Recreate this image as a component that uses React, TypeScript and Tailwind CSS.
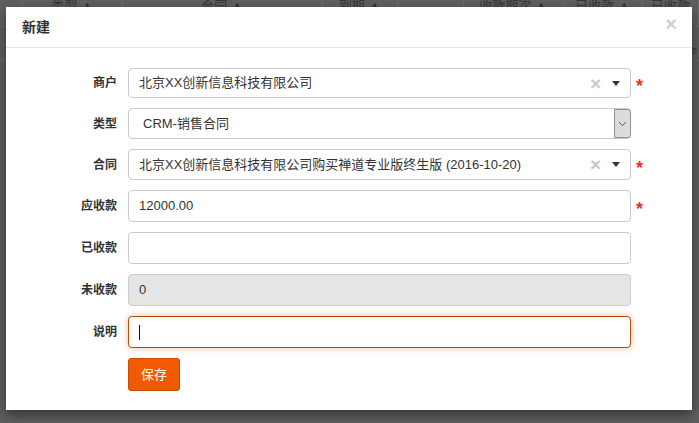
import React from 'react';

const font = { fontFamily: '"Liberation Sans", "Noto Sans CJK SC", sans-serif' };

function Select2({ value }: { value: string }) {
  return (
    <div className="flex-1 h-full flex items-center border border-[#ccc] rounded-[4px] bg-white pl-[10px] pr-[8px]">
      <span className="flex-1 truncate text-[13px] text-[#333]">{value}</span>
      <span className="text-[#c8c8c8] text-[19px] font-bold leading-none mr-[11px]">×</span>
      <span className="w-0 h-0 border-l-[4px] border-r-[4px] border-t-[5px] border-l-transparent border-r-transparent border-t-[#333] mr-[2px]" />
    </div>
  );
}

function Row({
  label,
  h,
  required,
  children,
}: {
  label: string;
  h: string;
  required?: boolean;
  children: React.ReactNode;
}) {
  return (
    <div className={`flex items-center ${h} mb-[10px]`}>
      <div className="w-[122px] shrink-0 pr-[11px] text-right text-[12px] font-bold text-[#333]">{label}</div>
      <div className="w-[503px] h-full flex">{children}</div>
      {required && <span className="ml-[5px] text-[#e8322a] text-[18px] font-bold leading-none mt-[6px]">*</span>}
    </div>
  );
}

export default function App() {
  const cols = [23, 100, 200, 75, 66, 100, 79, 56];
  const heads = ['', '类型 ▲', '合同 ▲', '到期 ▲', '', '收款期次 ▲', '已收款 ▲', '已收款'];
  return (
    <div className="relative w-[699px] h-[423px] bg-[#5f5f5f] overflow-hidden" style={font}>
      {/* page behind the overlay */}
      <div className="flex h-[27px] border-b border-[#6b6b6b]">
        {cols.map((w, i) => (
          <div
            key={i}
            style={{ width: w }}
            className="shrink-0 border-r border-[#6b6b6b] text-[13px] text-[#363636] text-center leading-[12px]"
          >
            {heads[i]}
          </div>
        ))}
      </div>
      <div className="flex h-[34px] border-b border-[#6b6b6b] justify-end pr-[2px] items-end">
        <span className="text-[#3a3a3a] text-[13px]">≡</span>
      </div>

      {/* modal */}
      <div className="absolute left-[6px] top-[7px] w-[686px] h-[403px] bg-white shadow-[0_5px_12px_rgba(0,0,0,0.45)]">
        <div className="h-[41px] border-b border-[#e5e5e5] flex items-center justify-between pl-[16px] pr-[15px]">
          <span className="text-[14px] font-bold text-[#333]">新建</span>
          <span className="text-[20px] font-bold text-[#cfcfcf] leading-none -mt-[6px]">×</span>
        </div>
        <div className="pt-[20px]">
          <Row label="商户" h="h-[30px]" required>
            <Select2 value="北京XX创新信息科技有限公司" />
          </Row>
          <Row label="类型" h="h-[31px]">
            <div className="flex-1 h-full flex items-center border border-[#ccc] rounded-[4px] bg-white pl-[14px]">
              <span className="flex-1 text-[13px] text-[#333]">CRM-销售合同</span>
              <span className="w-[17px] h-full bg-[#dcdcdc] border border-[#8f8f8f] rounded-r-[3px] -mr-px flex items-center justify-center">
                <svg width="9" height="6" viewBox="0 0 9 6">
                  <path d="M1 1.2 L4.5 4.6 L8 1.2" fill="none" stroke="#555" strokeWidth="1" />
                </svg>
              </span>
            </div>
          </Row>
          <Row label="合同" h="h-[31px]" required>
            <Select2 value="北京XX创新信息科技有限公司购买禅道专业版终生版 (2016-10-20)" />
          </Row>
          <Row label="应收款" h="h-[32px]" required>
            <div className="flex-1 h-full flex items-center border border-[#ccc] rounded-[4px] bg-white pl-[10px] text-[13px] text-[#333]">
              12000.00
            </div>
          </Row>
          <Row label="已收款" h="h-[32px]">
            <div className="flex-1 h-full border border-[#ccc] rounded-[4px] bg-white" />
          </Row>
          <Row label="未收款" h="h-[32px]">
            <div className="flex-1 h-full flex items-center border border-[#ccc] rounded-[4px] bg-[#e5e5e5] pl-[10px] text-[13px] text-[#333]">
              0
            </div>
          </Row>
          <Row label="说明" h="h-[32px]">
            <div className="flex-1 h-full flex items-center border border-[#b44a0a] rounded-[4px] bg-white pl-[10px] shadow-[0_0_7px_rgba(230,110,40,0.45)]">
              <span className="w-px h-[15px] bg-[#111]" />
            </div>
          </Row>
          <div className="flex">
            <div className="w-[122px] shrink-0" />
            <button className="h-[33px] w-[52px] bg-[#f25a00] border border-[#c94a00] rounded-[3px] text-white text-[13px]">
              保存
            </button>
          </div>
        </div>
      </div>
    </div>
  );
}
